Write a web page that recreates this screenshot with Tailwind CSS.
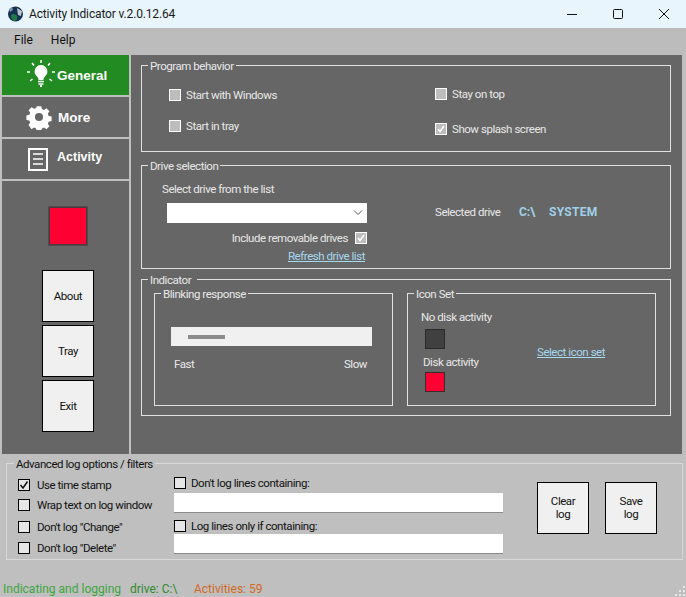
<!DOCTYPE html>
<html lang="en">
<head>
    <meta charset="UTF-8">
    <title>Activity Indicator</title>
    <script src="https://cdn.jsdelivr.net/npm/@tailwindcss/browser@4"></script>
</head>
<body class="bg-[#bfbfbf]">
<div class="w-[686px] h-[597px] overflow-hidden relative flex flex-col font-['Roboto',sans-serif] text-[11.5px] tracking-[-0.45px] leading-4 text-[#e8e8e8]">

    <!-- Title bar -->
    <div class="h-7 bg-[#e8f5fc] flex items-center text-[#1a1a1a] shrink-0">
        <svg class="ml-2 w-[15px] h-[16px]" viewBox="0 0 15 16">
            <circle cx="7.5" cy="8" r="7.5" fill="#16304f"/>
            <path d="M3 9c2-2 5-1 6 1s0 4-2 5c-2 0-4-2-4-6z" fill="#1f7a4a"/>
            <path d="M9 2l5 3-1 5-3-1z" fill="#b9c4cc"/>
            <path d="M1 3l3-2 1 3-3 2z" fill="#7f97a8"/>
        </svg>
        <span class="ml-[6px] text-[12px] tracking-[-0.15px]">Activity Indicator v.2.0.12.64</span>
        <div class="ml-auto flex items-center">
            <svg class="w-[12px] h-[12px] mr-[34px]" viewBox="0 0 12 12"><path d="M1 6.5h10" stroke="#111" fill="none"/></svg>
            <svg class="w-[12px] h-[12px] mr-[34px]" viewBox="0 0 12 12"><rect x="1.5" y="1.5" width="9" height="9" rx="1" stroke="#111" fill="none"/></svg>
            <svg class="w-[12px] h-[12px] mr-[16px]" viewBox="0 0 12 12"><path d="M1 1l10 10M11 1L1 11" stroke="#111" fill="none"/></svg>
        </div>
    </div>

    <!-- Menu -->
    <div class="h-[27px] bg-[#bcbcbc] flex items-center text-[#111] text-[12px] tracking-normal shrink-0 pb-[3px]">
        <span class="ml-[14px]">File</span>
        <span class="ml-[18px]">Help</span>
    </div>

    <!-- Main -->
    <div class="h-[399px] flex pl-[2px] gap-[2px] shrink-0">
        <!-- Sidebar -->
        <div class="w-[127px] flex flex-col gap-[2px] font-['Liberation_Sans',sans-serif] tracking-normal">
            <div class="h-[40px] bg-[#228b22] flex items-center text-white font-bold text-[13.5px]">
                <svg class="ml-[25px] w-[28px] h-[30px]" viewBox="0 0 28 30">
                    <path d="M14 5a6.5 6.5 0 0 0-4 11.500c1 1 1.500 2 1.500 3.500h5c0-1.500.5-2.500 1.500-3.500A6.500 6.500 0 0 0 14 5z" fill="#fff"/>
                    <path d="M11 21.500h6M11.500 24h5" stroke="#fff" stroke-width="1.500" fill="none"/>
                    <path d="M13 26h2" stroke="#fff" stroke-width="2" fill="none"/>
                    <path d="M14 0v3M5 3l2 2.500M23 3l-2 2.500M0 12h3M25 12h3M3 21l2.500-2M25 21l-2.500-2" stroke="#fff" stroke-width="1.500" fill="none"/>
                </svg>
                <span class="ml-[2px] mt-[2px]">General</span>
            </div>
            <div class="h-[40px] bg-[#666666] flex items-center text-white font-bold text-[13.5px]">
                <svg class="ml-[24px] w-[26px] h-[26px]" viewBox="0 0 26 26">
                    <path fill-rule="evenodd" fill="#fff" d="M10.500 1h5l.7 3.200 2.300 1 2.800-1.800 3.300 3.300-1.800 2.800 1 2.300 3.200.7v5l-3.200.7-1 2.300 1.800 2.800-3.300 3.300-2.800-1.800-2.300 1-.7 3.200h-5l-.7-3.200-2.300-1-2.800 1.800L1.400 22l1.800-2.800-1-2.300L-1 16.200v-5l3.200-.7 1-2.300L1.400 5.400l3.300-3.300 2.800 1.800 2.300-1z M13 8.500a4.500 4.500 0 1 0 0 9 4.500 4.500 0 0 0 0-9z" transform="translate(1.300 1.300) scale(.9)"/>
                </svg>
                <span class="ml-[6px] mt-[2px]">More</span>
            </div>
            <div class="h-[40px] bg-[#666666] flex items-center text-white font-bold text-[12.5px]">
                <svg class="ml-[25px] w-[22px] h-[25px]" viewBox="0 0 22 25">
                    <path d="M2 2h18v21H2z" stroke="#fff" stroke-width="2" fill="none"/>
                    <path d="M6 7h10M6 12h10M6 17h10" stroke="#fff" stroke-width="1.500" fill="none"/>
                </svg>
                <span class="ml-[8px] -mt-[4px]">Activity</span>
            </div>
            <div class="flex-1 bg-[#666666] flex flex-col text-[#111] font-['Roboto',sans-serif] text-[11.5px] tracking-[-0.45px]">
                <div class="ml-[47px] mt-[26px] w-[38px] h-[38px] bg-[#ff0033] border border-[#4a3a3f] shadow-[0_0_0_1px_#5a4a50]"></div>
                <button class="ml-[40px] mt-[25px] w-[52px] h-[52px] bg-[#f0f0f0] border border-black">About</button>
                <button class="ml-[40px] mt-[3px] w-[52px] h-[52px] bg-[#f0f0f0] border border-black">Tray</button>
                <button class="ml-[40px] mt-[3px] w-[52px] h-[52px] bg-[#f0f0f0] border border-black">Exit</button>
            </div>
        </div>

        <!-- Settings panel -->
        <div class="w-[551px] bg-[#666666] pt-[10px] pl-[10px]">
            <!-- Program behavior -->
            <div class="relative w-[530px] h-[87px] border border-[#e0e0e0] flex">
                <span class="absolute -top-[8px] left-[6px] px-[2px] bg-[#666666]">Program behavior</span>
                <div class="w-[293px] pl-[27px] pt-[21px] flex flex-col gap-[15px]">
                    <div class="flex items-center gap-[5px]"><span class="w-[12px] h-[12px] bg-[#bdbdbd] border border-white"></span>Start with Windows</div>
                    <div class="flex items-center gap-[5px]"><span class="w-[12px] h-[12px] bg-[#bdbdbd] border border-white"></span>Start in tray</div>
                </div>
                <div class="pt-[20px] flex flex-col gap-[19px]">
                    <div class="flex items-center gap-[5px]"><span class="w-[12px] h-[12px] bg-[#bdbdbd] border border-white"></span>Stay on top</div>
                    <div class="flex items-center gap-[5px]">
                        <span class="w-[12px] h-[12px] bg-[#bdbdbd] border border-white flex">
                            <svg viewBox="0 0 10 10" class="w-[10px] h-[10px]"><path d="M2 5l2 2.500L8 2" stroke="#fff" stroke-width="1.500" fill="none"/></svg>
                        </span>Show splash screen
                    </div>
                </div>
            </div>

            <!-- Drive selection -->
            <div class="relative w-[530px] h-[104px] mt-[13px] border border-[#e0e0e0] flex">
                <span class="absolute -top-[8px] left-[6px] px-[2px] bg-[#666666]">Drive selection</span>
                <div class="w-[293px] pt-[15px]">
                    <div class="pl-[20px]">Select drive from the list</div>
                    <div class="ml-[25px] mt-[6px] w-[200px] h-[20px] bg-white flex items-center justify-end pr-[4px]">
                        <svg class="w-[10px] h-[6px]" viewBox="0 0 10 6"><path d="M1 .5l4 4 4-4" stroke="#555" fill="none"/></svg>
                    </div>
                    <div class="mt-[7px] w-[225px] flex items-center justify-end gap-[7px]">
                        Include removable drives
                        <span class="w-[12px] h-[12px] bg-[#bdbdbd] border border-white flex">
                            <svg viewBox="0 0 10 10" class="w-[10px] h-[10px]"><path d="M2 5l2 2.500L8 2" stroke="#fff" stroke-width="1.500" fill="none"/></svg>
                        </span>
                    </div>
                    <div class="mt-[2px] w-[223px] text-right text-[#a6d8ee] underline">Refresh drive list</div>
                </div>
                <div class="pt-[38px] flex">
                    <span class="w-[84px]">Selected drive</span>
                    <span class="w-[30px] font-bold text-[12px] tracking-normal text-[#9fd0e8]">C:\</span>
                    <span class="font-bold text-[12px] tracking-[0.3px] text-[#9fd0e8]">SYSTEM</span>
                </div>
            </div>

            <!-- Indicator -->
            <div class="relative w-[530px] h-[137px] mt-[10px] border border-[#e0e0e0] flex pl-[12px] pt-[13px] gap-[14px]">
                <span class="absolute -top-[8px] left-[6px] px-[2px] pr-[6px] bg-[#666666]">Indicator</span>
                <div class="relative w-[239px] h-[113px] border border-[#e0e0e0] pl-[16px] pt-[33px]">
                    <span class="absolute -top-[8px] left-[6px] px-[2px] bg-[#666666]">Blinking response</span>
                    <div class="w-[201px] h-[19px] bg-[#f0f0f0] pl-[17px] pt-[8px]">
                        <div class="w-[37px] h-[4px] bg-[#8c8c8c]"></div>
                    </div>
                    <div class="w-[201px] mt-[10px] flex justify-between pl-[3px] pr-[5px]">
                        <span>Fast</span><span>Slow</span>
                    </div>
                </div>
                <div class="relative w-[249px] h-[113px] border border-[#e0e0e0] flex">
                    <span class="absolute -top-[8px] left-[6px] px-[2px] bg-[#666666]">Icon Set</span>
                    <div class="w-[129px] pt-[15px]">
                        <div class="pl-[13px]">No disk activity</div>
                        <div class="ml-[17px] mt-[4px] w-[20px] h-[20px] bg-[#404040] border border-[#2b2b2b]"></div>
                        <div class="pl-[15px] mt-[5px]">Disk activity</div>
                        <div class="ml-[17px] mt-[2px] w-[20px] h-[20px] bg-[#ff0033] border border-[#3a2a2f]"></div>
                    </div>
                    <div class="pt-[50px] text-[#a6d8ee] underline">Select icon set</div>
                </div>
            </div>
        </div>
    </div>

    <!-- Log options -->
    <div class="relative ml-[6px] mt-[9px] w-[677px] h-[97px] border border-[#d8d8d8] flex text-[#111] shrink-0">
        <span class="absolute -top-[8px] left-[7px] px-[2px] bg-[#bfbfbf]">Advanced log options / filters</span>
        <div class="w-[167px] pl-[11px] pt-[13px]">
            <div class="flex items-center gap-[7px]">
                <span class="w-[12px] h-[12px] bg-[#e6e6e6] border border-black flex">
                    <svg viewBox="0 0 10 10" class="w-[10px] h-[10px]"><path d="M1.500 5l2.500 3L8.500 1.500" stroke="#111" stroke-width="1.500" fill="none"/></svg>
                </span>Use time stamp
            </div>
            <div class="mt-[4px] flex items-center gap-[7px]"><span class="w-[12px] h-[12px] bg-[#e6e6e6] border border-black"></span>Wrap text on log window</div>
            <div class="mt-[6px] flex items-center gap-[7px]"><span class="w-[12px] h-[12px] bg-[#e6e6e6] border border-black"></span>Don't log "Change"</div>
            <div class="mt-[5px] flex items-center gap-[7px]"><span class="w-[12px] h-[12px] bg-[#e6e6e6] border border-black"></span>Don't log "Delete"</div>
        </div>
        <div class="w-[329px] pt-[11px]">
            <div class="flex items-center gap-[5px]"><span class="w-[12px] h-[12px] bg-[#e6e6e6] border border-black"></span>Don't log lines containing:</div>
            <div class="mt-[2px] h-[20px] bg-white border-b border-[#8a8a8a]"></div>
            <div class="mt-[5px] flex items-center gap-[5px]"><span class="w-[12px] h-[12px] bg-[#e6e6e6] border border-black"></span>Log lines only if containing:</div>
            <div class="h-[20px] bg-white border-b border-[#8a8a8a]"></div>
        </div>
        <div class="ml-[34px] pt-[18px] flex gap-[16px]">
            <button class="w-[52px] h-[52px] bg-[#f0f0f0] border border-black leading-[13px]">Clear<br>log</button>
            <button class="w-[52px] h-[52px] bg-[#f0f0f0] border border-black leading-[13px]">Save<br>log</button>
        </div>
    </div>

    <!-- Status bar -->
    <div class="h-4 mt-[21px] flex text-[12px] tracking-normal whitespace-nowrap shrink-0">
        <span class="ml-[3px] w-[127px] text-[#3da63d]">Indicating and logging</span>
        <span class="w-[64px] text-[#2e8b2e]">drive: C:\</span>
        <span class="text-[#d2691e]">Activities: 59</span>
    </div>

    <!-- Resize grip -->
    <svg class="absolute right-0 bottom-0 w-[12px] h-[12px]" viewBox="0 0 12 12">
        <path d="M9 1h2v2H9zM5 5h2v2H5zM9 5h2v2H9zM1 9h2v2H1zM5 9h2v2H5zM9 9h2v2H9z" fill="#e8e8e8"/>
    </svg>
</div>
</body>
</html>
